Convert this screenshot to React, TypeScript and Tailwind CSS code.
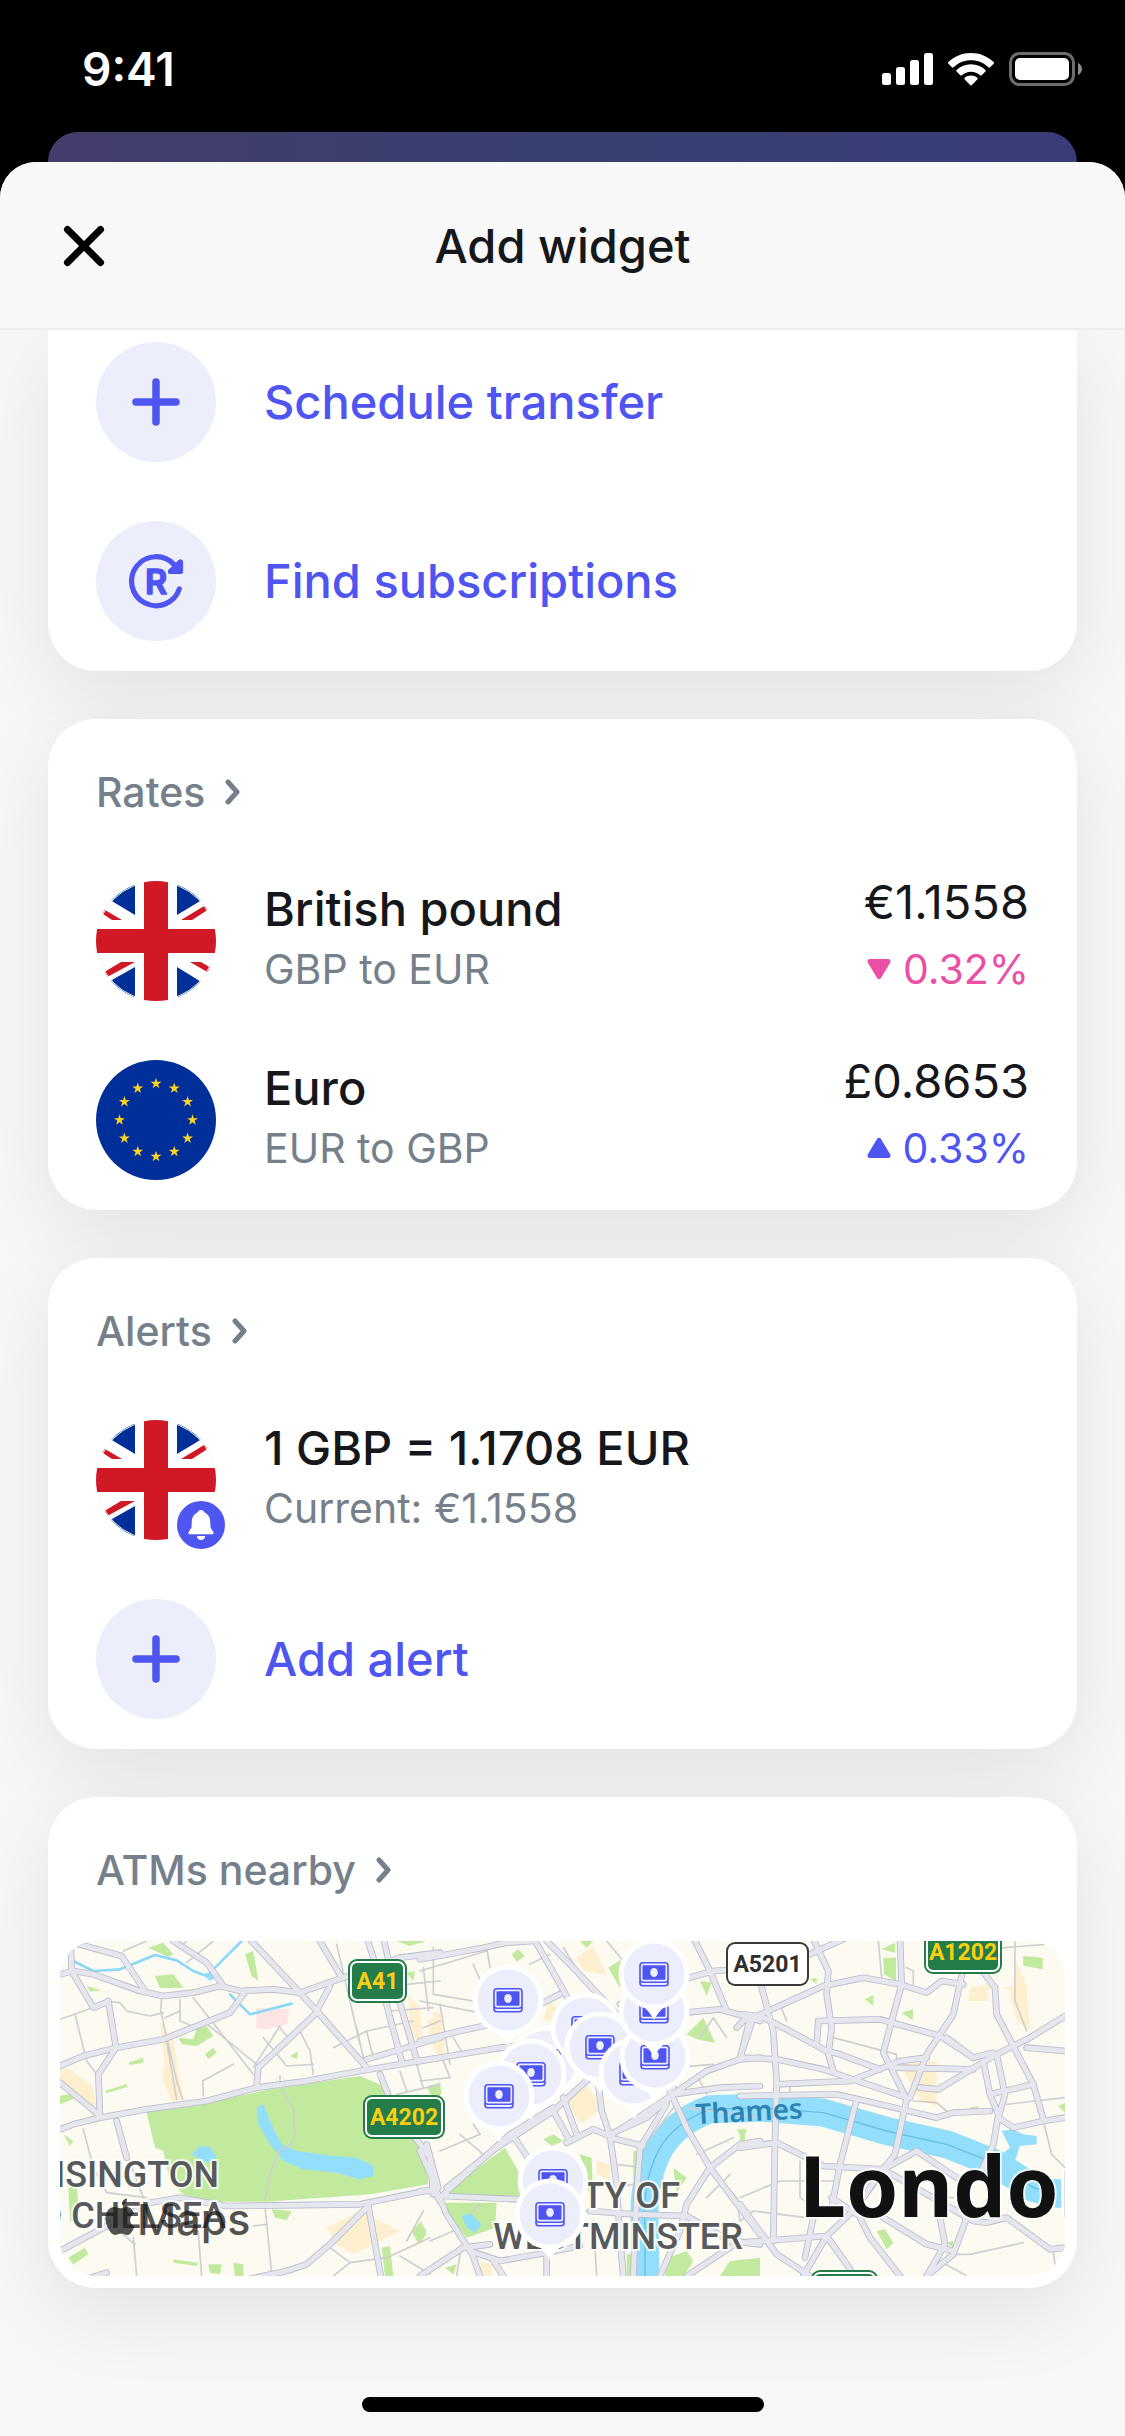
import type { ReactNode } from 'react';

export default function App() {
  return (
    <div className="flex min-h-screen flex-col bg-black font-['Inter',sans-serif] text-[#15171a]">
      <StatusBar />
      <div className="mx-12 h-[30px] rounded-t-[30px] bg-linear-to-r from-[#433d6b] via-[#374070] to-[#383c78]" />
      <main className="flex flex-1 flex-col overflow-hidden rounded-t-[36px] bg-[#f7f7f7]">
        <SheetHeader />
        <div className="flex flex-col gap-12 px-12">
          <Card className="rounded-b-[48px] pt-3">
            <Rows>
              <ActionRow label="Schedule transfer" icon={<PlusIcon />} />
              <ActionRow label="Find subscriptions" icon={<SubscriptionsIcon />} />
            </Rows>
          </Card>

          <Card className="rounded-[48px]">
            <CardTitle>Rates</CardTitle>
            <Rows>
              <RateRow flag={<UkFlag />} name="British pound" pair="GBP to EUR" rate="€1.1558" change="0.32%" up={false} />
              <RateRow flag={<EuFlag />} name="Euro" pair="EUR to GBP" rate="£0.8653" change="0.33%" up />
            </Rows>
          </Card>

          <Card className="rounded-[48px]">
            <CardTitle>Alerts</CardTitle>
            <Rows>
              <div className="flex items-start gap-12">
                <div className="relative">
                  <UkFlag />
                  <BellBadge />
                </div>
                <RowText title="1 GBP = 1.1708 EUR" subtitle="Current: €1.1558" />
              </div>
              <ActionRow label="Add alert" icon={<PlusIcon />} />
            </Rows>
          </Card>

          <Card className="rounded-[48px]">
            <CardTitle>ATMs nearby</CardTitle>
            <div className="-mt-[18px] px-3 pb-3">
              <AtmMap />
            </div>
          </Card>
        </div>
        <div className="relative mx-auto mt-auto mb-6 h-[15px] w-[402px] rounded-full bg-black" />
      </main>
    </div>
  );
}

function StatusBar() {
  return (
    <div className="flex h-[132px] items-center justify-between pt-1.5 pr-[43px] pl-[82px] text-white">
      <span className="text-[46px] leading-none font-semibold">9:41</span>
      <div className="flex items-center gap-[15px]">
        <svg width="51" height="32" viewBox="0 0 51 32" fill="currentColor">
          <rect x="0" y="20" width="9" height="12" rx="2.5" />
          <rect x="14" y="14" width="9" height="18" rx="2.5" />
          <rect x="28" y="7" width="9" height="25" rx="2.5" />
          <rect x="42" y="0" width="9" height="32" rx="2.5" />
        </svg>
        <svg width="46" height="33" viewBox="0 0 46 33" fill="currentColor">
          <path d="M23 0C14.200 0 6.200 3.400.4 9c-.5.500-.5 1.200 0 1.700l3.500 3.600c.5.500 1.200.5 1.700 0C10.200 9.900 16.300 7.300 23 7.300s12.800 2.600 17.400 7c.5.500 1.200.5 1.700 0l3.500-3.600c.5-.5.5-1.200 0-1.700C39.800 3.400 31.800 0 23 0Z" />
          <path d="M23 11.300c-5.500 0-10.600 2.100-14.400 5.600-.5.500-.5 1.200 0 1.700l3.700 3.600c.5.500 1.200.5 1.700 0 2.400-2.200 5.500-3.500 9-3.500s6.600 1.300 9 3.500c.5.500 1.200.5 1.700 0l3.700-3.600c.5-.5.5-1.200 0-1.700-3.800-3.500-8.900-5.600-14.400-5.600Z" />
          <path d="M23 22.500c-2.400 0-4.600.8-6.300 2.300-.5.500-.5 1.200 0 1.700l5.400 5.500c.5.500 1.300.5 1.800 0l5.400-5.500c.5-.5.5-1.200 0-1.700-1.700-1.500-3.900-2.300-6.300-2.300Z" />
        </svg>
        <svg width="73" height="34" viewBox="0 0 73 34">
          <rect x="1.500" y="1.500" width="63" height="31" rx="9" fill="none" stroke="#6d6d6d" strokeWidth="3" />
          <rect x="6" y="6" width="54" height="22" rx="5" fill="#fff" />
          <path d="M69 11c2.500 1.200 4 3.500 4 6s-1.500 4.800-4 6Z" fill="#8c8c8c" />
        </svg>
      </div>
    </div>
  );
}

function SheetHeader() {
  return (
    <header className="relative z-10 grid h-[168px] grid-cols-[1fr_auto_1fr] items-center border-b-2 border-[#ebecec] bg-[#f8f8f8] px-[63px] pt-0.5">
      <button type="button" aria-label="Close" className="justify-self-start">
        <svg width="42" height="42" viewBox="0 0 42 42" fill="none" stroke="#000" strokeWidth="7" strokeLinecap="round">
          <path d="M4.500 4.500 37.500 37.500M37.500 4.500 4.500 37.500" />
        </svg>
      </button>
      <h1 className="text-[47px] leading-[60px] font-medium">Add widget</h1>
    </header>
  );
}

function Card({ className, children }: { className: string; children: ReactNode }) {
  return (
    <section className={`bg-white shadow-[0_24px_84px_rgba(0,0,0,0.085)] ${className}`}>{children}</section>
  );
}

function CardTitle({ children }: { children: ReactNode }) {
  return (
    <h2 className="h-[162px] px-12 pt-12 text-[41px] leading-[50px] font-medium text-[#75808b]">
      <button type="button" className="flex items-center gap-5">
        {children}
        <svg width="15" height="26" viewBox="0 0 15 26" fill="none" stroke="currentColor" strokeWidth="5" strokeLinecap="round" strokeLinejoin="round">
          <path d="M3 3 12 13 3 23" />
        </svg>
      </button>
    </h2>
  );
}

function Rows({ children }: { children: ReactNode }) {
  return <div className="flex flex-col gap-[59px] px-12 pb-[30px]">{children}</div>;
}

function ActionRow({ icon, label }: { icon: ReactNode; label: string }) {
  return (
    <button type="button" className="flex items-center gap-12 text-left text-[#4f55f1]">
      <span className="size-[120px] shrink-0 rounded-full bg-[#eceefc]">{icon}</span>
      <span className="text-[47px] leading-[60px] font-medium">{label}</span>
    </button>
  );
}

function RowText({ title, subtitle }: { title: string; subtitle: string }) {
  return (
    <div className="flex-1">
      <p className="text-[47px] leading-[56px] font-medium">{title}</p>
      <p className="text-[41px] leading-[64px] text-[#75808b]">{subtitle}</p>
    </div>
  );
}

interface RateRowProps {
  flag: ReactNode;
  name: string;
  pair: string;
  rate: string;
  change: string;
  up: boolean;
}

function RateRow({ flag, name, pair, rate, change, up }: RateRowProps) {
  return (
    <div className="flex items-start gap-12">
      {flag}
      <RowText title={name} subtitle={pair} />
      <div className="text-right">
        <p className="text-[47px] leading-[42px]">{rate}</p>
        <p
          className={`mt-3.5 flex items-center justify-end gap-3 text-[41px] leading-[64px] ${
            up ? 'text-[#4f55f1]' : 'text-[#eb4fa4]'
          }`}
        >
          <svg width="24" height="22" viewBox="0 0 24 22" fill="currentColor" stroke="currentColor" strokeWidth="5" strokeLinejoin="round">
            {up ? <path d="M12 3.500 21 18.500H3Z" /> : <path d="M3 3.500H21L12 18.500Z" />}
          </svg>
          {change}
        </p>
      </div>
    </div>
  );
}

function PlusIcon() {
  return (
    <svg viewBox="0 0 120 120" fill="none" stroke="currentColor" strokeWidth="7.500" strokeLinecap="round">
      <path d="M60 40V80M40 60H80" />
    </svg>
  );
}

function SubscriptionsIcon() {
  return (
    <svg viewBox="0 0 120 120" fill="none" stroke="currentColor" strokeWidth="5.200" strokeLinecap="round" strokeLinejoin="round">
      <path d="M83.300 68A24.500 24.500 0 1 1 78 43.500" />
      <path d="M84.500 41V50.500H74.500Z" fill="currentColor" />
      <text x="60" y="72.500" textAnchor="middle" fontSize="34" fontWeight="600" fill="currentColor" strokeWidth="1.500">
        R
      </text>
    </svg>
  );
}

function UkFlag() {
  return (
    <svg className="size-[120px] shrink-0 rounded-full" viewBox="0 0 120 120">
      <path fill="#fff" d="M0 0H120V120H0Z" />
      <path fill="#012f99" d="M39 0V34L0 10.600V0ZM81 0V34L120 10.600V0ZM39 120V86L0 108V120ZM81 120V86L120 110V120Z" />
      <path fill="#d01925" d="M0 23.700 26 39H16L0 28.500ZM120 17.700 85 39H96L120 23.500ZM0 96 25 81H39L0 102ZM94 81H105L120 90V96Z" />
      <circle cx="60" cy="60" r="59.500" fill="none" stroke="#f3f4f5" strokeWidth="1" />
      <path fill="#d01925" d="M48 0H72V48H120V72H72V120H48V72H0V48H48Z" />
    </svg>
  );
}

function EuFlag() {
  return (
    <svg className="size-[120px] shrink-0 rounded-full" viewBox="0 0 120 120">
      <path fill="#012f99" d="M0 0H120V120H0Z" />
      {Array.from({ length: 12 }, (_, i) => {
        const angle = (i * Math.PI) / 6;
        const x = 60 + 36.5 * Math.sin(angle);
        const y = 60 - 36.5 * Math.cos(angle);
        return (
          <path
            key={i}
            transform={`translate(${x} ${y}) scale(5.8)`}
            fill="#fed221"
            d="M0-1 .225-.31H.951L.363.118 .588.809 0 .382-.588.809-.363.118-.951-.31H-.225Z"
          />
        );
      })}
    </svg>
  );
}

function BellBadge() {
  return (
    <span className="absolute -right-[15px] -bottom-[15px] size-[60px] rounded-full border-6 border-white bg-[#4f55f1]">
      <svg viewBox="0 0 48 48" fill="#fff">
        <path d="M24 9c1.800 0 2.800 1 3.300 2.300 3.600 1.600 5.700 4.700 5.900 8.700l.3 6.500 2.800 4.500c.6 1.200 0 2.200-1.300 2.200H13c-1.300 0-1.900-1-1.300-2.200l2.800-4.500.3-6.500c.2-4 2.300-7.100 5.900-8.700C21.200 10 22.200 9 24 9Z" />
        <path d="M19.800 35h8.400c-.3 2.700-2 4-4.200 4s-3.900-1.300-4.200-4Z" />
      </svg>
    </span>
  );
}

// Map tiles, drawn in a 3015x1005 space; each one is shifted to its own place
const tiles = [
  {
    name: 'west',
    transform: 'translate(-60 -480)',
    shops: 'M360 720 375 850 365 890 395 960 430 955 400 780ZM60 860 100 870 160 920 170 980 60 900ZM1105 640 1140 680 1150 790 1110 760ZM860 1340 960 1290 1080 1350 940 1420 890 1390ZM1160 720 1200 700V830L1180 800Z',
    parks:
      'M320 995 500 965 690 925 960 885 1030 915 1080 1000 1160 1110 1165 1210 990 1240 680 1262 500 1262 430 1240 390 1200 370 1110 345 1100ZM325 500 370 485 400 520 385 528ZM345 585 400 580 430 620 360 622ZM615 520 640 510 655 600 635 585ZM415 770 460 775 470 740 500 735 520 765 470 795 425 790ZM495 820 520 800 530 815 505 835ZM265 845 310 830V845L270 852ZM195 930 260 908 262 918 200 936ZM60 945 108 935 110 950 60 970ZM140 615 185 628 150 632ZM1070 480H1160L1110 495ZM1100 575 1125 570 1120 600ZM750 825 775 810 770 835ZM85 1220 110 1210 120 1330 90 1320ZM85 1430 135 1400 145 1420 100 1450ZM400 1435 475 1445 470 1455 400 1445ZM505 1450 545 1450 540 1480 510 1475ZM580 1445 610 1450V1485H585ZM695 1285 755 1290 740 1318 705 1310ZM1115 1350 1140 1325 1160 1360 1135 1388ZM1025 1400 1050 1395 1060 1485H1035ZM70 1060 100 1080 90 1095ZM1165 915 1200 905V960L1170 940Z',
    water:
      'M650 980 670 970 690 1020 725 1090 770 1110 880 1125 950 1130 1000 1155V1185L960 1195 890 1175 790 1165 730 1140 690 1090 655 1030ZM455 1120 480 1095 510 1098 530 1130 500 1145ZM490 580 515 570 525 590 510 600Z',
    major: [
      'M60 580 100 570 160 580 300 630 370 645 460 635 540 615 600 630 700 625 780 635 910 590 1080 530 1200 515',
      'M100 485 245 525 315 630',
      'M400 480 500 545 548 612',
      'M625 470 780 635 830 690 980 860',
      'M60 855 130 825 230 800 370 775 470 735 570 695 610 640',
      'M205 660 228 800 175 880 180 1005',
      'M60 905 175 1000',
      'M60 1045 100 1030 180 1010 320 985 500 960 650 920 800 900 960 870 1200 830',
      'M980 470 1010 560 1085 840',
      'M1030 470 1060 600 1130 835',
      'M840 480 905 590',
      'M980 835 1200 770',
      'M830 690 870 615',
      'M1020 880 1060 980 1170 1130 1180 1240',
      'M650 915 655 860 830 695',
      'M230 1020 260 1130',
      'M60 1410 200 1335 330 1265 420 1250 560 1275 960 1270 1180 1225 1200 1260',
      'M600 1500 740 1470 800 1450 870 1390 985 1275 1025 1500',
      'M60 1520 200 1475',
      'M92 480 95 570 160 680 205 662',
    ],
    minor: [
      'M365 650 362 690 410 900 428 955M420 655V720L480 745M375 710 420 690M460 650 640 880M490 720 650 850M380 780 410 955',
      'M250 510 320 480M440 545 520 480M470 525 425 495 440 480M850 700 970 840M890 490 960 790M640 860 720 735M490 945 488 900 580 850M60 715 200 665',
      'M105 700 140 840 170 880M205 662 240 665 260 690 330 705 370 695M820 880 810 810 780 750M715 735 745 770M670 770 740 855 820 850',
      'M720 885V905M880 800 980 750 1120 720M1050 690 1180 680M1100 610 1200 600M1150 560 1165 690M950 740 970 830M980 750 1000 830M1080 870 1100 930M1130 850 1150 920M1070 940 1200 910',
      'M715 910 760 980 765 1060 750 1095 720 1105 690 1180 675 1255M130 1045 160 1160 200 1235M260 1120 310 1250M470 1290 485 1485M675 1275 695 1480M280 1370 290 1485M190 1310 285 1390',
      'M870 1400 930 1445 1040 1430 1170 1370M930 1445 880 1485M1080 1425 1170 1480M1100 1380 1150 1290M640 1335 680 1330M200 1235 320 1250',
    ],
  },
  {
    name: 'centre',
    transform: 'translate(1080 -60)',
    shops:
      'M40 270 65 280 75 400 45 395ZM470 110 520 75 560 160 490 150ZM390 240 430 280 420 320 370 290ZM440 540 500 495 550 560 480 610ZM530 720 570 730V780L530 760ZM180 1020 215 1030V1065H190Z',
    parks:
      'M80 810 255 680 300 760V835L90 825ZM60 845 230 845 225 920 140 950ZM565 140 605 115 620 170 600 200ZM800 340 850 290 885 365 830 355ZM275 100 295 85 315 105 290 122ZM840 180 875 185 860 225ZM20 500 60 490 65 520 40 525ZM370 655 400 640 430 660 395 675ZM480 700 515 710 520 840 500 800ZM760 740 800 770 770 815ZM640 690 665 690 660 800 640 770ZM735 1065 745 1010 800 990 820 1020 790 1065ZM620 1000H640V1065H620ZM900 1065 930 1020 1020 1010V1065ZM0 680 20 700V770L0 780ZM950 625H980L970 660ZM75 1040 110 1030 100 1060ZM0 900 20 930 0 970ZM480 60H520L500 80Z',
    water: 'M125 885 150 875 185 910 165 935 140 920Z',
    major: [
      'M0 115 110 95 190 80 260 65 340 60',
      'M340 50 420 190 470 280 530 370',
      'M380 60 450 130 600 290 760 500',
      'M0 360 120 330 260 300 420 220',
      'M0 420 240 380 330 370',
      'M820 50 870 150 920 270',
      'M600 250 700 200 880 150 1020 140',
      'M740 280 900 265 990 290 1020 300',
      'M80 800 230 680 400 570 510 470',
      'M60 830 270 640 400 560',
      'M400 570 450 660M430 530 470 640',
      'M440 665 520 625 570 645 700 560 860 450 960 415 1020 410',
      'M535 490 545 570 570 645 590 790 600 950 610 1065',
      'M570 640 680 590 760 520 900 500 1020 495',
      'M745 500 800 620 870 740 1020 940',
      'M570 650 670 675M740 550 660 680 650 820 640 1065',
      'M870 740 960 670 1020 660M870 740 800 850 780 930 720 1065',
      'M640 880 800 885 930 960 1020 970M950 320 980 290M990 290 960 415',
      'M0 810 50 810 80 880 150 990 240 1020 380 995 480 975',
      'M0 690 50 800M20 670 55 800M70 825 300 835M280 645 330 720',
      'M0 1065 130 980 210 970M150 980 180 1065M220 1020 250 1065M510 870 640 880M800 1065 960 960M380 1000V1065',
    ],
    minor: [
      'M0 150 200 90M40 80V220L160 240M0 240 250 290M60 250 90 430M160 130 190 200 230 330M250 310 420 210M330 130 390 100M200 80 210 140M100 350 130 400 240 390',
      'M60 690 180 640 160 610M120 640 190 700M0 480 90 470 70 420M840 350 880 290 920 350M760 440 880 430M830 460 860 520M830 700 940 650M880 760 950 830 960 900M670 740 590 730M520 900 530 1065M760 560 700 640',
      'M120 1000 110 1065M30 960 100 930M690 950 640 960M860 830 930 760M180 850 150 880M380 850 500 870M800 560 1020 590M580 800 640 790M560 60 610 120M430 80 500 190M10 320 60 300',
    ],
  },
  {
    name: 'east',
    transform: 'translate(2040 -60)',
    shops: 'M830 120 860 200 870 330 830 300 810 230ZM690 200 750 190 740 240 685 240ZM480 430 590 420 590 555 540 540ZM790 200 860 190 850 230Z',
    parks:
      'M430 110H468V180L432 160ZM425 85 465 65V95ZM850 105 908 110V145L850 135ZM375 235 400 222V255ZM485 275 520 265 518 298ZM210 175 230 170V190ZM410 930 435 925 460 965 440 985ZM0 1020 60 1030V1065H0ZM690 560 715 555V575H690ZM620 965 640 960V980ZM955 555 975 545V575ZM0 625 15 630V660L0 665Z',
    water: 'M785 630 820 625 850 640 890 645V670L840 675 825 720 860 740 880 760 790 790 785 700 810 680ZM940 775H963V860H945Z',
    major: [
      'M0 280 60 285 130 320 260 390 300 400 420 445',
      'M60 180 100 330 110 480 105 660 100 960',
      'M220 55 265 150 260 220 275 320 265 400 280 450',
      'M210 100 320 50M40 290 250 195 370 170 480 190 560 215 605 180 670 190',
      'M480 50 485 190 455 300 430 395 500 535 465 700 430 745',
      'M235 300 420 295 600 345 700 410',
      'M230 370 235 300M0 410 110 415 250 445 500 530',
      'M670 140 640 280 560 400 510 530',
      'M720 140 765 200 770 280 880 490 910 595',
      'M540 500 595 505 760 405 870 350 975 285',
      'M860 380 975 390M620 350 700 410 760 395',
      'M730 420 750 520 775 580 760 670 720 760M770 400 795 520 775 590 820 620 910 600 975 590',
      'M750 520 880 490M110 490 330 480 480 420 560 410M460 440 700 445',
      'M0 525 290 520 400 545 590 590 640 575 750 570',
      'M350 535 300 730 275 860M0 680 110 665 250 735 430 745 530 690 650 770',
      'M430 745 700 900 740 905 800 890 930 985 975 980',
      'M0 965 260 945 350 860 430 740M0 850 110 1000 210 1065M190 1065 260 945 345 1065',
      'M350 870 390 950 480 1065M430 890 560 970 640 990M600 890 615 970 560 1065M680 890 640 1000 560 1065',
      'M40 290 0 410M275 830 350 880M220 890 195 1010',
    ],
    minor: [
      'M415 60 425 170M825 60V240L860 330M730 85 920 70M280 350 470 400 470 430M120 250 140 300M0 830 120 780 280 780M180 720 180 830 210 850M40 870 200 890M800 550 975 530M910 600 935 700 975 740',
      'M640 1000 690 1000 850 965M600 1020 680 1065M940 990 945 1030M500 140 520 150V190M150 490V520M520 540 590 545 620 570M0 900 40 870M370 840 410 790M530 800 570 830M620 830H640',
    ],
  },
];

const pins = [
  [486, 120],
  [526, 87],
  [471, 133],
  [439, 155],
  [540, 106],
  [574, 132],
  [595, 116],
  [594, 70],
  [594, 33],
  [448, 59],
  [493, 240],
  [490, 273],
];

const THAMES = 'M1755 1040V860Q1745 720 1800 620 1850 540 1950 505L2100 500 2290 515 2480 570 2660 610 2800 665 2920 740 2990 760';

function AtmMap() {
  return (
    <svg
      className="h-[335px] w-full rounded-[36px]"
      viewBox="0 0 1005 335"
      preserveAspectRatio="xMidYMid slice"
      role="img"
      aria-label="Map of ATMs nearby"
    >
      <rect width="1005" height="335" fill="#fcfaf1" />
      <g transform="scale(.33333)" fill="none" strokeLinejoin="round" strokeLinecap="round">
        {tiles.map((tile) => (
          <g key={tile.name} transform={tile.transform} stroke="none">
            <path d={tile.shops} fill="#fef0cf" />
            <path d={tile.parks} fill="#c1ea9f" />
          </g>
        ))}
        <path d="M590 200 690 205 680 250 620 265 588 262Z" fill="#fde5e3" />
        <path d={THAMES} stroke="#93dffb" strokeWidth="84" strokeLinecap="butt" />
        <path d={THAMES} stroke="#69bfe0" strokeWidth="4" />
        {tiles.map((tile) => (
          <g key={tile.name} transform={tile.transform}>
            <path d={tile.water} fill="#93dffb" />
            {tile.minor.map((d) => (
              <path key={d} d={d} stroke="#cfcfd2" strokeWidth="5" />
            ))}
          </g>
        ))}
        <path d="M40 60 100 90 180 85 285 42 350 58 400 90 440 105M460 85 545 0M510 160 570 220 695 188" stroke="#8ad9f8" strokeWidth="8" />
        {tiles.map((tile) => (
          <g key={tile.name} transform={tile.transform} stroke="#b9bccb" strokeWidth="20">
            {tile.major.map((d) => (
              <path key={d} d={d} />
            ))}
          </g>
        ))}
        {tiles.map((tile) => (
          <g key={tile.name} transform={tile.transform} stroke="#e5e6ee" strokeWidth="15">
            {tile.major.map((d) => (
              <path key={d} d={d} />
            ))}
          </g>
        ))}
      </g>

      <RoadShield x={288} y={18} width={59} label="A41" />
      <RoadShield x={303} y={154} width={82} label="A4202" />
      <RoadShield x={864} y={-11} width={78} label="A1202" />
      <RoadShield x={751} y={329} width={67} />
      <RoadShield x={666} y={1} width={83} label="A5201" plain />

      <text x="636" y="183" transform="rotate(-3 636 183)" className="fill-[#2b84b4] font-['Noto_Sans',sans-serif] text-[28px] font-semibold">
        Thames
      </text>
      <g
        className="fill-[#58595b] stroke-white/80 font-['Roboto',sans-serif] text-[36px] font-medium"
        strokeWidth="4"
        paintOrder="stroke"
      >
        <text x="159" y="246" textAnchor="end">KENSINGTON</text>
        <text x="166" y="287" textAnchor="end">AND CHELSEA</text>
        <text x="620" y="267" textAnchor="end">CITY OF</text>
        <text x="558" y="308" textAnchor="middle">WESTMINSTER</text>
      </g>
      <text
        x="739"
        y="276"
        className="fill-[#111] stroke-white/80 font-['Noto_Sans',sans-serif] text-[84px] font-bold"
        strokeWidth="4"
        paintOrder="stroke"
      >
        London
      </text>

      <g className="fill-[#1a1a1a]/75">
        <path d="M62 264c3-.4 5.500-3.200 5-6.500-3 .3-5.700 3.200-5 6.500ZM67 266c-3 0-4 1.300-6 1.300S57.300 266 54.500 266c-5 0-9 4.500-9 11 0 8 5.500 17 9.500 17 2.500 0 3.300-1.500 6.200-1.500s3.600 1.500 6.200 1.500c3 0 6-5 7.100-8.500-5.500-2.500-6-10-.5-13-1.500-4-4-6.500-7-6.500Z" />
        <text x="77" y="294" className="text-[43px] font-medium">
          Maps
        </text>
      </g>

      {pins.map(([x, y]) => (
        <AtmPin key={`${x}-${y}`} x={x} y={y} />
      ))}
    </svg>
  );
}

interface RoadShieldProps {
  x: number;
  y: number;
  width: number;
  label?: string;
  plain?: boolean;
}

function RoadShield({ x, y, width, label, plain = false }: RoadShieldProps) {
  return (
    <g transform={`translate(${x} ${y})`}>
      <rect width={width} height="44" rx="9" fill={plain ? '#3a3a3a' : '#237c4a'} />
      <rect x="2" y="2" width={width - 4} height="40" rx="7" fill="#fff" />
      {!plain && <rect x="4" y="4" width={width - 8} height="36" rx="5" fill="#237c4a" />}
      {label && (
        <text
          x={width / 2}
          y="30"
          textAnchor="middle"
          className={`font-['Roboto',sans-serif] text-[23px] font-bold ${plain ? 'fill-[#2f2f2f]' : 'fill-[#f8cf12]'}`}
        >
          {label}
        </text>
      )}
    </g>
  );
}

function AtmPin({ x, y }: { x: number; y: number }) {
  return (
    <g transform={`translate(${x} ${y})`}>
      <path d="M-13 31C-7 35-4 39 0 46 4 39 7 35 13 31Z" fill="#fff" />
      <circle r="35.500" fill="#fff" />
      <circle r="30.500" fill="#eceefc" />
      <rect x="-14" y="-11.300" width="28" height="19.500" rx="3" fill="none" stroke="#4f55f1" strokeWidth="1.600" />
      <path d="M-14 7V9Q-14 11.700-11 11.700H11Q14 11.700 14 9V7" fill="none" stroke="#4f55f1" strokeWidth="1.600" />
      <rect x="-11.500" y="-8.800" width="23" height="14.500" rx="1" fill="#4f55f1" />
      <ellipse cy="-1.500" rx="3.800" ry="4.500" fill="#eceefc" />
    </g>
  );
}
